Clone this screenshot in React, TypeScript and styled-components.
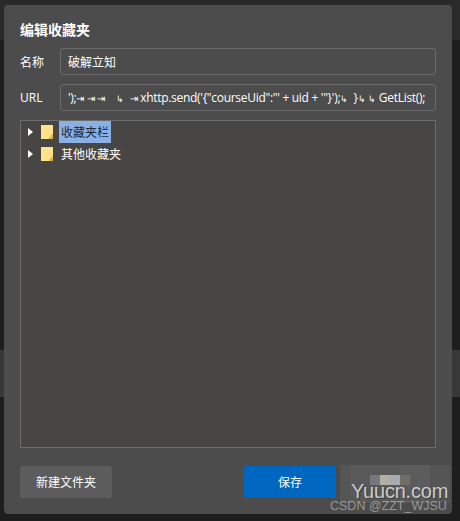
import React from "react";
import styled, { createGlobalStyle } from "styled-components";

const GlobalStyle = createGlobalStyle`
  html, body {
    margin: 0;
    padding: 0;
    background: #222;
  }
  body {
    font-family: "Open Sans", "Noto Sans CJK SC", sans-serif;
  }
`;

const Page = styled.div`
  position: relative;
  width: 460px;
  height: 521px;
  box-sizing: border-box;
  padding: 5px 8px 7px 4px;
  overflow: hidden;
  background: linear-gradient(
    to bottom,
    #2a2a2a 0,
    #2a2a2a 40px,
    #1e1e1e 40px,
    #1e1e1e 350px,
    #383838 350px,
    #383838 397px,
    #1e1e1e 397px
  );
`;

const Dialog = styled.div`
  width: 448px;
  height: 509px;
  box-sizing: border-box;
  padding: 16px;
  display: flex;
  flex-direction: column;
  background: #4c4c4c;
  border-radius: 4px;
  color: #fff;
`;

const Title = styled.div`
  font-size: 14px;
  font-weight: 700;
  line-height: 18px;
  margin-bottom: 9px;
`;

const FieldRow = styled.div`
  display: flex;
  align-items: center;
  margin-bottom: 9px;
`;

const FieldLabel = styled.div`
  width: 40px;
  font-size: 12px;
`;

const Field = styled.div`
  flex: 1;
  height: 27px;
  box-sizing: border-box;
  padding: 0 7px;
  display: flex;
  align-items: center;
  overflow: hidden;
  white-space: pre;
  border: 1px solid #6a6a6a;
  border-radius: 3px;
  font-size: 12px;
`;

const UrlText = styled.span`
  letter-spacing: -0.3px;
`;

const Tree = styled.div`
  flex: 1;
  box-sizing: border-box;
  padding: 0 0 0 4px;
  background: #474644;
  border: 1px solid #6e6e6e;
`;

const TreeRow = styled.div`
  display: flex;
  align-items: center;
  height: 22px;
  font-size: 12px;
`;

const Arrow = styled.span`
  width: 0;
  height: 0;
  margin-left: 3px;
  margin-right: 8px;
  border-top: 4px solid transparent;
  border-bottom: 4px solid transparent;
  border-left: 5px solid #fff;
`;

const RowLabel = styled.span<{ $selected?: boolean }>`
  margin-left: ${(p) => (p.$selected ? "6px" : "8px")};
  padding: 1px ${(p) => (p.$selected ? "2px" : "0")} 0;
  line-height: 21px;
  background: ${(p) => (p.$selected ? "#8ab0e6" : "transparent")};
  color: ${(p) => (p.$selected ? "#1e2a3a" : "#fff")};
`;

const Footer = styled.div`
  display: flex;
  align-items: center;
  margin-top: 18px;
  padding-right: 4px;
  gap: 4px;
`;

const Button = styled.div<{ $primary?: boolean }>`
  width: 92px;
  height: 32px;
  display: flex;
  align-items: center;
  justify-content: center;
  font-size: 12px;
  border-radius: 2px;
  background: ${(p) => (p.$primary ? "#0067c0" : "#5c5c5c")};
`;

const Spacer = styled.div`
  flex: 1;
`;

const Mosaic = styled.svg`
  position: absolute;
  left: 340px;
  top: 465px;
`;

const SiteMark = styled.div`
  position: absolute;
  left: 351px;
  top: 483px;
  font-family: "Liberation Sans", sans-serif;
  font-size: 20px;
  line-height: 16px;
  letter-spacing: -0.2px;
  white-space: nowrap;
  color: rgba(255, 255, 255, 0.72);
  text-shadow: 1px 1px 1px rgba(0, 0, 0, 0.35);
`;

const CsdnMark = styled.div`
  position: absolute;
  left: 330px;
  top: 500px;
  font-family: "Liberation Sans", sans-serif;
  font-size: 12.5px;
  line-height: 12px;
  white-space: nowrap;
  color: rgba(255, 255, 255, 0.42);
`;

const TabGlyph = styled.span`
  font-size: 10px;
  letter-spacing: 2.5px;
`;

const ReturnGlyph = styled.span`
  font-size: 9px;
`;

const Folder = () => (
  <svg width="12" height="14" viewBox="0 0 12 14">
    <path d="M0 0H12V14H0Z" fill="#ffe28a" />
    <path d="M12 9.5V14H8V12H10V9.5Z" fill="#e5b436" />
  </svg>
);

const urlText = (
  <UrlText>
    ');
    <TabGlyph>⇥⇥⇥</TabGlyph>
    {"   "}
    <ReturnGlyph>↳</ReturnGlyph>
    {"  "}
    <TabGlyph>⇥</TabGlyph>
    {`xhttp.send('{"courseUid":"' + uid + '"}');`}
    <ReturnGlyph>↳</ReturnGlyph>
    {"  }"}
    <ReturnGlyph>↳</ReturnGlyph>
    {" "}
    <ReturnGlyph>↳</ReturnGlyph>
    {" GetList();"}
  </UrlText>
);

export default function App() {
  return (
    <Page>
      <GlobalStyle />
      <Dialog>
        <Title>编辑收藏夹</Title>
        <FieldRow>
          <FieldLabel>名称</FieldLabel>
          <Field>破解立知</Field>
        </FieldRow>
        <FieldRow>
          <FieldLabel>URL</FieldLabel>
          <Field>{urlText}</Field>
        </FieldRow>
        <Tree>
          <TreeRow>
            <Arrow />
            <Folder />
            <RowLabel $selected>收藏夹栏</RowLabel>
          </TreeRow>
          <TreeRow>
            <Arrow />
            <Folder />
            <RowLabel>其他收藏夹</RowLabel>
          </TreeRow>
        </Tree>
        <Footer>
          <Button>新建文件夹</Button>
          <Spacer />
          <Button $primary>保存</Button>
          <Button />
        </Footer>
      </Dialog>
      <Mosaic width="110" height="38" viewBox="0 0 110 38">
        <rect width="110" height="38" fill="#555555" />
        <rect x="10" width="50" height="38" fill="#595959" />
        <rect x="60" width="30" height="38" fill="#5c5c5c" />
        <rect x="30" y="10" width="10" height="10" fill="#747980" />
        <rect x="40" y="10" width="10" height="10" fill="#b5aea6" />
        <rect x="50" y="10" width="10" height="10" fill="#a9a9b2" />
        <rect x="60" y="10" width="10" height="10" fill="#6f6f68" />
      </Mosaic>
      <SiteMark>Yuucn.com</SiteMark>
      <CsdnMark>CSDN @ZZT_WJSU</CsdnMark>
    </Page>
  );
}
